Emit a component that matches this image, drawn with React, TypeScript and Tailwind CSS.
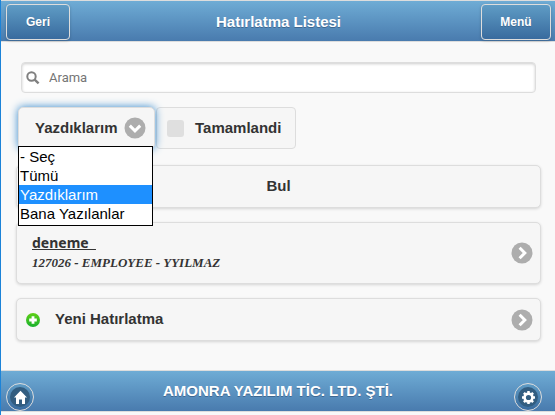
import { useState } from 'react';

const OPTIONS = ['- Seç', 'Tümü', 'Yazdıklarım', 'Bana Yazılanlar'];

const card =
  'w-full rounded-[5px] border border-[#ddd] bg-[#f6f6f6] shadow-[0_1px_3px_rgba(0,0,0,0.15)]';

const barButton =
  'h-9 rounded border border-[#ddd] bg-linear-to-b from-[#5f9cc5] to-[#396b9e] text-[12px] font-bold text-white [text-shadow:0_1px_0_#3e6790] shadow-[0_1px_3px_rgba(0,0,0,0.2)]';

const roundButton =
  'flex h-7 w-7 items-center justify-center rounded-full border border-[#ddd] bg-linear-to-b from-[#5f9cc5] to-[#396b9e]';

function Chevron({ down = false }: { down?: boolean }) {
  return (
    <svg viewBox="0 0 22 22" className="h-[22px] w-[22px] shrink-0" aria-hidden="true">
      <circle cx="11" cy="11" r="10.5" fill="#adadad" />
      <path
        d={down ? 'M5.8 8.6 11 13.8l5.2-5.2' : 'M8.6 5.8 13.8 11l-5.2 5.2'}
        fill="none"
        stroke="#fff"
        strokeWidth="3"
      />
    </svg>
  );
}

function SearchIcon() {
  return (
    <svg viewBox="0 0 14 14" className="h-[14px] w-[14px] shrink-0" aria-hidden="true">
      <circle cx="5.5" cy="5.5" r="4.2" fill="none" stroke="#808080" strokeWidth="2" />
      <path d="M8.6 8.6 12.6 12.4" stroke="#808080" strokeWidth="2.4" />
    </svg>
  );
}

function PlusIcon() {
  return (
    <svg viewBox="0 0 14 14" className="h-[14px] w-[14px] shrink-0" aria-hidden="true">
      <defs>
        <linearGradient id="plus" x1="0" y1="0" x2="0" y2="1">
          <stop offset="0" stopColor="#5fd016" />
          <stop offset="1" stopColor="#18b12e" />
        </linearGradient>
      </defs>
      <circle cx="7" cy="7" r="7" fill="url(#plus)" />
      <path d="M7 3.2v7.6M3.2 7h7.6" stroke="#fff" strokeWidth="2.8" />
    </svg>
  );
}

function HomeIcon() {
  return (
    <svg viewBox="0 0 20 20" className="h-5 w-5" aria-hidden="true">
      <circle cx="10" cy="10" r="10" fill="#325d80" />
      <path d="M10.5 3.8 17 10.5h-2V17h-3v-4.5H9V17H6v-6.5H4z" fill="#fff" />
    </svg>
  );
}

function GearIcon() {
  return (
    <svg viewBox="0 0 20 20" className="h-5 w-5" aria-hidden="true">
      <circle cx="10" cy="10" r="10" fill="#325d80" />
      <circle cx="10.5" cy="10.5" r="3.9" fill="none" stroke="#fff" strokeWidth="2.6" />
      <path
        d="M10.5 4v2.2M10.5 14.8V17M4 10.5h2.2M14.8 10.5H17M5.9 5.9l1.6 1.6M13.5 13.5l1.6 1.6M15.1 5.9l-1.6 1.6M7.5 13.5l-1.6 1.6"
        stroke="#fff"
        strokeWidth="2.5"
      />
    </svg>
  );
}

export default function App() {
  const [filter, setFilter] = useState('Yazdıklarım');
  const [open, setOpen] = useState(true);

  const choose = (value: string) => {
    setFilter(value);
    setOpen(false);
  };

  return (
    <div className="flex min-h-screen flex-col border-l border-[#1c83d8] bg-[#f9f9f9] pb-[3px] font-['Liberation_Sans',Arial,sans-serif] text-[15px] text-[#333]">
      <header className="flex h-[42px] items-center justify-between border-y border-[#ddd] bg-linear-to-b from-[#6facd5] to-[#497bae] pt-[2px] pr-1 pl-[5px]">
        <div className="flex flex-1">
          <button type="button" className={`${barButton} w-16`}>Geri</button>
        </div>
        <h1 className="font-bold text-white [text-shadow:0_1px_0_#3e6790]">Hatırlatma Listesi</h1>
        <div className="flex flex-1 justify-end">
          <button type="button" className={`${barButton} w-[70px]`}>Menü</button>
        </div>
      </header>

      <main className="flex grow flex-col gap-[14px] pt-5 pr-[14px] pl-[15px]">
        <label className="mr-[5px] ml-[5px] flex h-[31px] items-center gap-[9px] rounded border border-[#ddd] bg-white pl-1 shadow-[inset_0_1px_3px_rgba(0,0,0,0.2)]">
          <SearchIcon />
          <input
            type="search"
            aria-label="Arama"
            placeholder="Arama"
            className="h-full min-w-0 flex-1 bg-transparent font-['Roboto',sans-serif] text-[13px] outline-none placeholder:text-[#757575]"
          />
        </label>

        <div className="flex pl-[2px] font-bold">
          <div className="relative flex h-[42px] w-[137px] rounded-[5px] border border-[#ddd] bg-[#f6f6f6] shadow-[0_0_8px_#3388cc]">
            <select
              aria-label="Liste"
              value={filter}
              onChange={(e) => choose(e.target.value)}
              onKeyDown={(e) => e.key === 'Escape' && setOpen(false)}
              className="w-full appearance-none pl-4 outline-none"
            >
              {OPTIONS.map((o) => (
                <option key={o}>{o}</option>
              ))}
            </select>
            <span className="pointer-events-none absolute top-[9px] right-2">
              <Chevron down />
            </span>
            {open && (
              <ul className="absolute top-[38px] left-[-1px] z-10 w-[135px] border border-black bg-white pb-[2px] font-normal text-black">
                {OPTIONS.map((o) => (
                  <li
                    key={o}
                    onClick={() => choose(o)}
                    className={`h-[19px] cursor-default pl-px leading-[19px] ${o === filter ? 'bg-[#1e90ff] text-white' : ''}`}
                  >
                    {o}
                  </li>
                ))}
              </ul>
            )}
          </div>
          <label className="ml-px flex h-[42px] w-[140px] items-center gap-[11px] rounded border border-[#ddd] bg-[#f6f6f6] pl-[10px]">
            <input
              type="checkbox"
              className="h-[17px] w-[17px] appearance-none rounded-[3px] bg-[#dfdfdf] checked:bg-[#3388cc]"
            />
            Tamamlandi
          </label>
        </div>

        <button type="button" className={`${card} mt-[2px] h-[43px] font-bold`}>Bul</button>

        <a href="#deneme" className={`${card} flex h-[62px] items-center justify-between pr-[7px] pl-[15px]`}>
          <div>
            <h2 className="font-['Noto_Sans',sans-serif] text-[14px] leading-5 font-bold whitespace-pre underline">{'deneme  '}</h2>
            <p className="font-['Liberation_Serif',serif] text-[13px] leading-5 font-bold italic">
              127026 - EMPLOYEE - YYILMAZ
            </p>
          </div>
          <Chevron />
        </a>

        <a href="#yeni" className={`${card} flex h-[43px] items-center pr-[7px] pl-[9px] font-bold`}>
          <PlusIcon />
          <span className="ml-[15px] grow">Yeni Hatırlatma</span>
          <Chevron />
        </a>
      </main>

      <footer className="flex h-[42px] items-end justify-between border-y border-[#ddd] bg-linear-to-b from-[#6facd5] to-[#497bae] pr-[13px] pl-[5px]">
        <div className="flex flex-1">
          <button type="button" aria-label="Ana Sayfa" className={roundButton}>
            <HomeIcon />
          </button>
        </div>
        <h2 className="self-center pl-2 font-bold text-white [text-shadow:0_1px_0_#3e6790]">
          AMONRA YAZILIM TİC. LTD. ŞTİ.
        </h2>
        <div className="flex flex-1 justify-end">
          <button type="button" aria-label="Ayarlar" className={roundButton}>
            <GearIcon />
          </button>
        </div>
      </footer>
    </div>
  );
}
